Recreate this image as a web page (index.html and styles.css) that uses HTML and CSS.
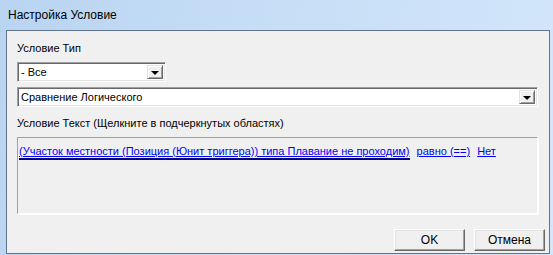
FILE: index.html
```html
<!DOCTYPE html>
<html lang="ru">
<head>
    <meta charset="UTF-8">
    <title>Настройка Условие</title>
    <link rel="stylesheet" href="styles.css">
</head>
<body>

<div class="window">
    <div class="titlebar">Настройка Условие</div>

    <div class="client">
        <div class="label">Условие Тип</div>

        <div class="combo combo-short">
            <span class="combo-text">- Все</span>
            <span class="combo-btn"><span class="arrow"></span></span>
        </div>

        <div class="combo combo-wide">
            <span class="combo-text">Сравнение Логического</span>
            <span class="combo-btn"><span class="arrow"></span></span>
        </div>

        <div class="label label-text">Условие Текст (Щелкните в подчеркнутых областях)</div>

        <div class="textbox">
            <a href="#" class="link link-active">(Участок местности (Позиция (Юнит триггера)) типа Плавание не проходим)</a>
            <a href="#" class="link">равно (==)</a>
            <a href="#" class="link">Нет</a>
        </div>

        <div class="buttons">
            <button class="btn">OK</button>
            <button class="btn">Отмена</button>
        </div>
    </div>
</div>

</body>
</html>
```

FILE: styles.css
```css
body {
    margin: 0;
    font-family: "Liberation Sans", Arial, sans-serif;
    font-size: 11px;
    color: #000;
    background: #fff;
}
.window {
    width: 553px;
    height: 255px;
    box-sizing: border-box;
    padding: 0 3px 1px 6px;
    background: linear-gradient(100deg, #b9d4f1 0%, #c5ddf6 40%, #d3e6fb 100%);
    display: flex;
    flex-direction: column;
}
.titlebar {
    height: 30px;
    line-height: 30px;
    padding-left: 2px;
    font-size: 12px;
    color: #000;
}
.client {
    flex: 1;
    background: #f0f0f0;
    border: 1px solid #62748b;
    padding: 0 11px 0 10px;
    display: flex;
    flex-direction: column;
}
.label {
    margin-top: 11px;
    height: 13px;
    line-height: 13px;
}
.label-text {
    margin-top: 10px;
}
.combo {
    display: flex;
    align-items: stretch;
    height: 20px;
    box-sizing: border-box;
    background: #fff;
    border: 1px solid;
    border-color: #a0a0a0 #fff #fff #a0a0a0;
    box-shadow: inset 1px 1px 0 #696969, inset -1px -1px 0 #e3e3e3;
    padding: 2px;
    margin-top: 7px;
}
.combo-short {
    width: 149px;
}
.combo-wide {
    width: 521px;
    margin-top: 5px;
}
.combo-text {
    flex: 1;
    line-height: 14px;
    padding-left: 1px;
}
.combo-btn {
    width: 16px;
    box-sizing: border-box;
    background: #f0f0f0;
    border: 1px solid;
    border-color: #e3e3e3 #696969 #696969 #e3e3e3;
    box-shadow: inset 1px 1px 0 #fff, inset -1px -1px 0 #a0a0a0;
    display: flex;
    align-items: center;
    justify-content: center;
}
.arrow {
    width: 0;
    height: 0;
    border-left: 4px solid transparent;
    border-right: 4px solid transparent;
    border-top: 4px solid #000;
    margin-top: 1px;
}
.textbox {
    margin-top: 7px;
    width: 521px;
    height: 77px;
    box-sizing: border-box;
    border: 1px solid;
    border-color: #a0a0a0 #fff #fff #a0a0a0;
    box-shadow: 1px 1px 0 #fff;
    padding: 7px 1px;
    line-height: 13px;
}
.link {
    color: #0000ff;
    text-decoration: underline;
    margin-right: 4px;
}
.link-active {
    border-bottom: 2px solid #000080;
    padding-bottom: 1px;
}
.buttons {
    margin-top: auto;
    margin-bottom: 2px;
    display: flex;
    justify-content: flex-end;
    gap: 9px;
    margin-right: -7px;
}
.btn {
    width: 71px;
    height: 22px;
    font-family: "Liberation Sans", Arial, sans-serif;
    font-size: 12px;
    background: #f0f0f0;
    border: 1px solid;
    border-color: #fff #696969 #696969 #fff;
    box-shadow: inset -1px -1px 0 #a0a0a0, inset 1px 1px 0 #e3e3e3;
    padding: 0;
    color: #000;
}
```
